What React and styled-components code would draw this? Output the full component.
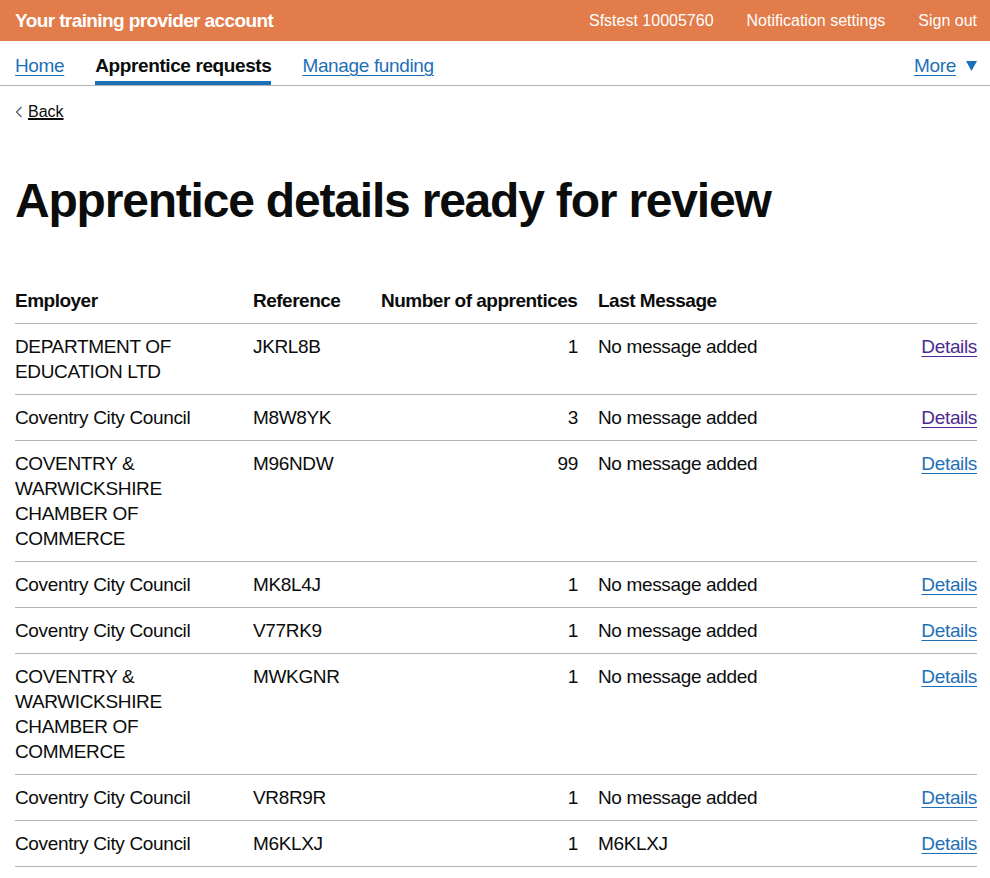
import React from 'react';
import styled, { createGlobalStyle } from 'styled-components';

const rows = [
  { employer: 'DEPARTMENT OF EDUCATION LTD', ref: 'JKRL8B', count: 1, message: 'No message added', visited: true },
  { employer: 'Coventry City Council', ref: 'M8W8YK', count: 3, message: 'No message added', visited: true },
  { employer: 'COVENTRY & WARWICKSHIRE CHAMBER OF COMMERCE', ref: 'M96NDW', count: 99, message: 'No message added' },
  { employer: 'Coventry City Council', ref: 'MK8L4J', count: 1, message: 'No message added' },
  { employer: 'Coventry City Council', ref: 'V77RK9', count: 1, message: 'No message added' },
  { employer: 'COVENTRY & WARWICKSHIRE CHAMBER OF COMMERCE', ref: 'MWKGNR', count: 1, message: 'No message added' },
  { employer: 'Coventry City Council', ref: 'VR8R9R', count: 1, message: 'No message added' },
  { employer: 'Coventry City Council', ref: 'M6KLXJ', count: 1, message: 'M6KLXJ' },
];

function App() {
  return (
    <>
      <GlobalStyle />
      <Header>
        <ServiceName>Your training provider account</ServiceName>
        <HeaderLinks>
          <HeaderLink>Sfstest 10005760</HeaderLink>
          <HeaderLink>Notification settings</HeaderLink>
          <HeaderLink>Sign out</HeaderLink>
        </HeaderLinks>
      </Header>
      <Nav>
        <NavList>
          <NavItem><NavLink href="#">Home</NavLink></NavItem>
          <NavItem active><ActiveLabel>Apprentice requests</ActiveLabel></NavItem>
          <NavItem><NavLink href="#">Manage funding</NavLink></NavItem>
        </NavList>
        <NavItem>
          <NavLink href="#">More</NavLink>
          <Caret width="11" height="10" viewBox="0 0 11 10">
            <polygon points="0,0 11,0 5.5,10" fill="#1d70b8" />
          </Caret>
        </NavItem>
      </Nav>
      <Main>
        <BackLink href="#">
          <svg width="8" height="12" viewBox="0 0 8 12">
            <polyline points="6.5,1 1.5,6 6.5,11" fill="none" stroke="#505a5f" strokeWidth="1.2" />
          </svg>
          <span>Back</span>
        </BackLink>
        <Heading>Apprentice details ready for review</Heading>
        <Table>
          <colgroup>
            <col style={{ width: 238 }} />
            <col style={{ width: 128 }} />
            <col style={{ width: 217 }} />
            <col />
            <col style={{ width: 60 }} />
          </colgroup>
          <thead>
            <tr>
              <HeadCell>Employer</HeadCell>
              <HeadCell>Reference</HeadCell>
              <HeadCell>Number of apprentices</HeadCell>
              <HeadCell>Last Message</HeadCell>
              <HeadCell />
            </tr>
          </thead>
          <tbody>
            {rows.map((r, i) => (
              <tr key={i}>
                <Cell>{r.employer}</Cell>
                <Cell>{r.ref}</Cell>
                <Cell numeric>{r.count}</Cell>
                <Cell>{r.message}</Cell>
                <Cell numeric last>
                  <DetailsLink href="#" visited={r.visited ? 1 : 0}>Details</DetailsLink>
                </Cell>
              </tr>
            ))}
          </tbody>
        </Table>
      </Main>
    </>
  );
}

const GlobalStyle = createGlobalStyle`
  body {
    margin: 0;
    font-family: "Liberation Sans", Arial, sans-serif;
    color: #0b0c0c;
    background: #fff;
  }
`;

const Header = styled.header`
  height: 41px;
  background: #e27c4a;
  display: flex;
  align-items: center;
  justify-content: space-between;
  padding: 0 13px 0 15px;
  color: #fff;
`;

const ServiceName = styled.div`
  font-size: 19px;
  font-weight: 700;
  letter-spacing: -0.6px;
`;

const HeaderLinks = styled.div`
  display: flex;
  gap: 33px;
`;

const HeaderLink = styled.span`
  font-size: 16px;
`;

const Nav = styled.nav`
  display: flex;
  justify-content: space-between;
  padding: 0 13px 0 15px;
  border-bottom: 1px solid #b1b4b6;
`;

const NavList = styled.div`
  display: flex;
  gap: 31px;
`;

const NavItem = styled.div`
  display: flex;
  align-items: center;
  gap: 10px;
  padding: 12px 0 3px;
  line-height: 25px;
  font-size: 19px;
  border-bottom: 4px solid ${p => (p.active ? '#1d70b8' : 'transparent')};
`;

const NavLink = styled.a`
  color: #1d70b8;
  letter-spacing: -0.35px;
  text-decoration: underline;
  text-decoration-thickness: 1px;
  text-underline-offset: 3px;
`;

const ActiveLabel = styled.span`
  font-weight: 700;
  letter-spacing: -0.4px;
`;

const Caret = styled.svg`
  display: block;
`;

const Main = styled.main`
  padding: 0 13px 0 15px;
`;

const BackLink = styled.a`
  display: inline-flex;
  align-items: center;
  gap: 5px;
  margin-top: 16px;
  font-size: 16px;
  line-height: 20px;
  color: #0b0c0c;
  span {
    text-decoration: underline;
    text-decoration-thickness: 1px;
    text-underline-offset: 2px;
  }
`;

const Heading = styled.h1`
  margin: 54px 0 52px;
  font-size: 48px;
  line-height: 50px;
  font-weight: 700;
  letter-spacing: -1.2px;
`;

const Table = styled.table`
  width: 100%;
  table-layout: fixed;
  border-collapse: collapse;
  font-size: 19px;
  line-height: 25px;
`;

const HeadCell = styled.th`
  text-align: left;
  font-weight: 700;
  letter-spacing: -0.5px;
  padding: 10px 20px 10px 0;
  border-bottom: 1px solid #b1b4b6;
  vertical-align: top;
  &:last-child {
    padding-right: 0;
  }
`;

const Cell = styled.td`
  text-align: ${p => (p.numeric ? 'right' : 'left')};
  letter-spacing: -0.35px;
  padding: 10px ${p => (p.last ? 0 : 20)}px 10px 0;
  border-bottom: 1px solid #b1b4b6;
  vertical-align: top;
`;

const DetailsLink = styled.a`
  color: ${p => (p.visited ? '#4c2c92' : '#1d70b8')};
  text-decoration: underline;
  text-decoration-thickness: 1px;
  text-underline-offset: 3px;
`;

export default App;
